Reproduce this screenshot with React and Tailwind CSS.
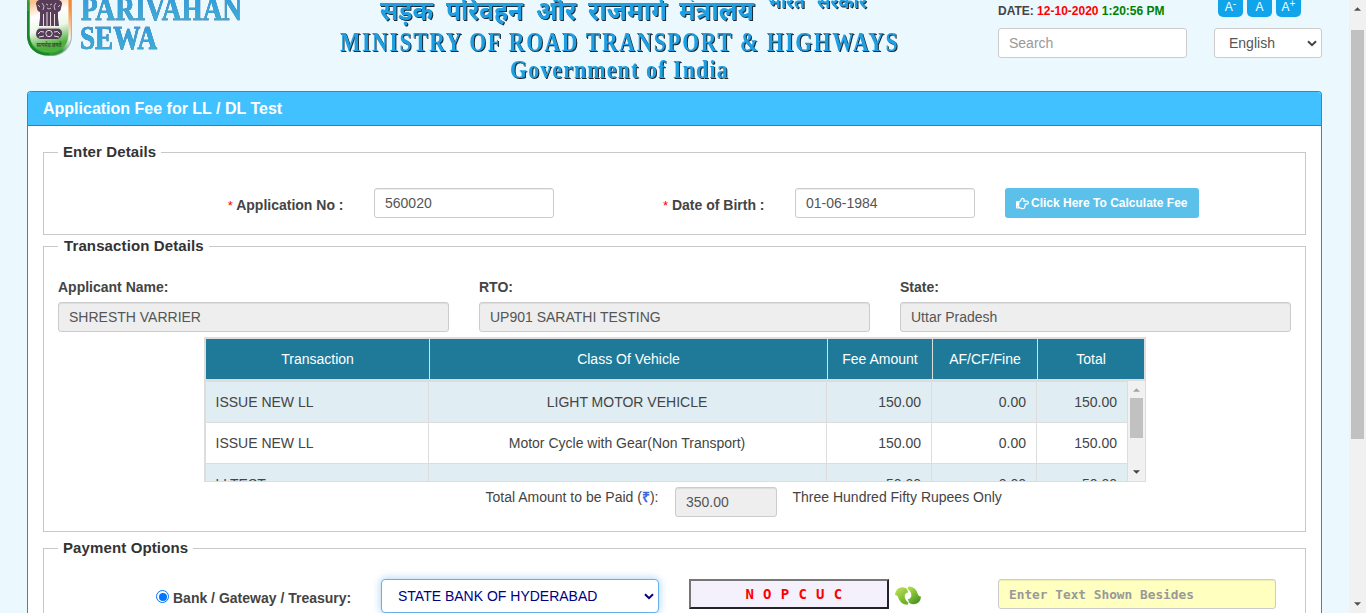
import React from "react";
import { FaRegHandPointRight } from "react-icons/fa";

const rows = [
  ["ISSUE NEW LL", "LIGHT MOTOR VEHICLE", "150.00", "0.00", "150.00"],
  ["ISSUE NEW LL", "Motor Cycle with Gear(Non Transport)", "150.00", "0.00", "150.00"],
  ["LLTEST", "", "50.00", "0.00", "50.00"],
];

function Chevron({ className }) {
  return (
    <svg viewBox="0 0 10 7" className={className} fill="none" stroke="currentColor" strokeWidth="2">
      <path d="M1 1.2 L5 5.2 L9 1.2" />
    </svg>
  );
}

function Arrow({ up, className }) {
  return (
    <svg viewBox="0 0 8 4" className={className} fill="currentColor">
      <path d={up ? "M0 4 L4 0 L8 4Z" : "M0 0 L4 4 L8 0Z"} />
    </svg>
  );
}

function Emblem() {
  return (
    <g>
      <defs>
        <linearGradient id="rim" x1="1" y1="0" x2="0.2" y2="1">
          <stop offset="0.25" stopColor="#f58a35" />
          <stop offset="0.5" stopColor="#f4f4ee" />
          <stop offset="0.68" stopColor="#2f9a35" />
        </linearGradient>
        <linearGradient id="plate" x1="0.2" y1="0" x2="0.35" y2="1">
          <stop offset="0.3" stopColor="#f9c08e" />
          <stop offset="0.5" stopColor="#ffffff" />
          <stop offset="0.7" stopColor="#eef7e8" />
          <stop offset="0.94" stopColor="#4caf3c" />
        </linearGradient>
      </defs>
      <rect x="2" y="-23" width="43" height="79" rx="20" fill="#7d8a86" opacity="0.6" />
      <rect x="0" y="-25" width="44" height="80.5" rx="20" fill="url(#rim)" />
      <path d="M1 11V35Q2 54 22 54" fill="none" stroke="#17862a" strokeWidth="2.2" />
      <rect x="2.8" y="-22" width="38.6" height="74.5" rx="17.5" fill="url(#plate)" />
      <g fill="#4f3554" opacity="0.95">
        <path d="M9 4Q9 1 12 0H32Q35 1 35 4L34 8Q34 11 31 12V18L32 26H12L13 18V12Q10 11 10 8Z" />
        <path d="M12 28.5H32Q35.5 30 35 34.5Q34 38 31 39H13Q9.500 38 9 34.500Q9 30 12 28.500Z" />
      </g>
      <g stroke="#e9dadd" strokeWidth="1" fill="none">
        <path d="M20 12V27M23.500 12V27M16.500 14V26M27.500 14V26" />
        <path d="M15 3L17 6L16 10M29 3L27 6L28 10M19 4L21 5M25 4L23 5M20 8Q22 10 24 8M11 5L13 7M33 5L31 7" strokeWidth="0.8" />
        <circle cx="22" cy="33.5" r="3.2" />
        <path d="M11 34Q13 30 17 32M12 37L17 36M33 34Q31 30 27 32M32 37L27 36" />
        <path d="M11 27.700H33" />
      </g>
      <text x="9.500" y="46.500" fontSize="6" fontWeight="bold" fill="#3f4b35" textLength="25" lengthAdjust="spacingAndGlyphs">सत्यमेव जयते</text>
    </g>
  );
}

function Header() {
  return (
    <header className="flex h-[91px] shrink-0 items-start pl-[27px]">
      <svg width="230" height="60" viewBox="0 0 230 60" className="shrink-0" fontFamily="'Liberation Serif','Noto Sans',serif">
        <defs>
          <linearGradient id="word" x1="0" y1="0" x2="0" y2="1">
            <stop offset="0.2" stopColor="#309ee2" />
            <stop offset="1" stopColor="#42b2cf" />
          </linearGradient>
        </defs>
        <Emblem />
        <g fill="url(#word)" stroke="#38a7dc" strokeWidth="0.5" fontSize="33" fontWeight="bold" className="[filter:drop-shadow(0.8px_0.8px_0.5px_#6e5a72)]">
          <text x="54" y="20" textLength="161" lengthAdjust="spacingAndGlyphs">PARIVAHAN</text>
          <text x="53" y="49" textLength="77" lengthAdjust="spacingAndGlyphs">SEWA</text>
        </g>
      </svg>
      <svg width="580" height="88" viewBox="330 0 580 88" className="ml-[73px] shrink-0 [filter:drop-shadow(1px_1px_0.3px_#1c2a33)]" fill="#1f9fe2" fontWeight="bold">
        <g fontFamily="'Noto Sans',sans-serif" fontSize="27">
          <text x="380" y="19.500" textLength="53" lengthAdjust="spacingAndGlyphs">सड़क</text>
          <text x="446" y="19.500" textLength="77" lengthAdjust="spacingAndGlyphs">परिवहन</text>
          <text x="536" y="19.500" textLength="40" lengthAdjust="spacingAndGlyphs">और</text>
          <text x="588" y="19.500" textLength="79" lengthAdjust="spacingAndGlyphs">राजमार्ग</text>
          <text x="679" y="19.500" textLength="75" lengthAdjust="spacingAndGlyphs">मंत्रालय</text>
          <text x="767" y="7.500" fontSize="19" textLength="38" lengthAdjust="spacingAndGlyphs">भारत</text>
          <text x="817" y="7.500" fontSize="19" textLength="50" lengthAdjust="spacingAndGlyphs">सरकार</text>
        </g>
        <g fontFamily="'Liberation Serif',serif">
          <text transform="translate(340 51.300) scale(0.8 1)" fontSize="27" textLength="697" lengthAdjust="spacing">MINISTRY OF ROAD TRANSPORT &amp; HIGHWAYS</text>
          <text transform="translate(510 77.500) scale(0.84 1)" fontSize="26" textLength="259" lengthAdjust="spacing">Government of India</text>
        </g>
      </svg>
      <div className="ml-[88px] w-[324px] shrink-0">
        <div className="flex h-[28px] items-start">
          <div className="w-[220px] pt-[3px] text-[12px] leading-[16px] font-bold whitespace-nowrap">
            DATE: <span className="text-[#ff0000]">12-10-2020</span> <span className="text-[#008000]">1:20:56 PM</span>
          </div>
          <div className="flex gap-1 text-[12px] leading-[14px] text-white">
            {["-", "", "+"].map((s, i) => (
              <div key={i} className="h-[17px] w-[25px] rounded-b-[5px] bg-[#10a5ea] text-center">
                A<span className="relative -top-[4px] text-[10px] leading-none">{s}</span>
              </div>
            ))}
          </div>
        </div>
        <div className="flex gap-[27px] text-[14px]">
          <div className="flex h-[30px] w-[189px] items-center rounded-[3px] border border-[#ccc] bg-white px-[10px] text-[#999]">Search</div>
          <div className="flex h-[30px] w-[108px] items-center justify-between rounded-[3px] border border-[#ccc] bg-white pr-[4px] pl-[14px] text-[#555]">
            English
            <Chevron className="h-[7px] w-[10px] text-[#444]" />
          </div>
        </div>
      </div>
    </header>
  );
}

function Fieldset({ title, className, legendClass = "", children }) {
  return (
    <fieldset className={"m-0 block min-w-0 border border-[#c8c8c8] " + className}>
      <legend className={"ml-[14px] h-[21px] px-[5px] text-[15px] leading-[20px] font-bold tracking-[0.12px] text-[#333] " + legendClass}>{title}</legend>
      {children}
    </fieldset>
  );
}

const input =
  "flex h-[30px] shrink-0 items-center rounded-[3px] border border-[#ccc] px-[10px] text-[#555] shadow-[inset_0_1px_1px_rgba(0,0,0,0.075)] ";

function Field({ label, value }) {
  return (
    <div className="w-[391px]">
      <div className="h-[25px] leading-[20px] font-bold">{label}</div>
      <div className={input + "bg-[#eee]"}>{value}</div>
    </div>
  );
}

function FeeTable() {
  return (
    <div className="ml-[160px] w-[942px] border-t-2 border-r border-b border-l-2 border-[#ddd]">
      <div className="grid h-[42px] grid-cols-[224px_398px_105px_105px_107px] border-b-2 border-[#ddd] bg-[#1f7a99] text-center leading-[40px] text-white *:border-r *:border-[#ddd]">
        <div>Transaction</div>
        <div>Class Of Vehicle</div>
        <div>Fee Amount</div>
        <div>AF/CF/Fine</div>
        <div>Total</div>
      </div>
      <div className="flex h-[100px] overflow-hidden">
        <div className="w-[922px]">
          {rows.map((r, i) => (
            <div
              key={i}
              className={
                "grid h-[41px] grid-cols-[223px_398px_105px_105px_91px] border-t border-[#ddd] text-right leading-[41px] *:border-r *:border-[#ddd] *:pr-[10px] " +
                (i % 2 ? "bg-white" : "bg-[#e0edf3]")
              }
            >
              <div className="pl-[9.500px] text-left">{r[0]}</div>
              <div className="pl-[9px] text-center">{r[1]}</div>
              <div>{r[2]}</div>
              <div>{r[3]}</div>
              <div>{r[4]}</div>
            </div>
          ))}
        </div>
        <div className="flex w-[17px] flex-col items-center bg-[#f1f1f1]">
          <Arrow up className="mt-[7px] h-[4px] w-[7px] text-[#a3a3a3]" />
          <div className="mt-[6px] h-[40px] w-[13px] bg-[#c1c1c1]" />
          <Arrow className="mt-[32px] h-[4px] w-[7px] text-[#444]" />
        </div>
      </div>
    </div>
  );
}

function RefreshIcon() {
  const swoosh = "M0 11Q0.500 4 7 3.200Q10.500 3 12 5L13.200 8.500Q11 8 9.800 11Q9 15 13.500 19L12.500 20.800Q5 20.500 3 13Q1.800 10.500 0 11Z";
  return (
    <svg viewBox="0 0 26 23" className="mt-[5px] ml-[6px] h-[23px] w-[26px] shrink-0">
      <defs>
        <linearGradient id="leafA" x1="0" y1="0" x2="0.6" y2="1">
          <stop offset="0.1" stopColor="#b9e05a" />
          <stop offset="1" stopColor="#6cb024" />
        </linearGradient>
        <linearGradient id="leafB" x1="0" y1="0" x2="0.6" y2="1">
          <stop offset="0.1" stopColor="#3f8f1c" />
          <stop offset="1" stopColor="#a5d843" />
        </linearGradient>
      </defs>
      <path d={swoosh} fill="url(#leafA)" />
      <path d={swoosh} fill="url(#leafB)" transform="rotate(180 13 11.700)" />
    </svg>
  );
}

export default function App() {
  return (
    <div className="flex h-[613px] w-[1366px] overflow-hidden bg-[#ebf8fe] font-['Liberation_Sans',Arial,sans-serif] text-[14px] leading-[20px] text-[#444]">
      <div className="flex w-[1349px] flex-col">
        <Header />
        <main className="mx-[27px] flex-1 rounded-t-[4px] border-x border-t border-[#1297cf] bg-white">
          <h1 className="h-[34px] rounded-t-[3px] border-b border-[#1d88c4] bg-[#41c1ff] pl-[15px] text-[16px] leading-[33px] font-bold text-white">
            Application Fee for LL / DL Test
          </h1>
          <div className="px-[15px] pt-[16px]">
            <Fieldset title="Enter Details" className="h-[93px]">
              <div className="flex items-start pt-[25px]">
                <div className="w-[299.500px] pt-[7px] text-right font-bold">
                  <span className="text-[13px] font-normal text-[#ff0000]">*</span> Application No :
                </div>
                <div className={input + "ml-[30.500px] w-[180px] bg-white"}>560020</div>
                <div className="w-[210.500px] pt-[7px] text-right font-bold">
                  <span className="text-[13px] font-normal text-[#ff0000]">*</span> Date of Birth :
                </div>
                <div className={input + "ml-[30.500px] w-[180px] bg-white"}>01-06-1984</div>
                <div className="ml-[30px] flex h-[30px] w-[194px] items-center rounded-[3px] bg-[#5bc0ea] pl-[11px] text-[12px] font-bold whitespace-nowrap text-white">
                  <FaRegHandPointRight className="mr-[2px] h-[13px] w-[13px]" />
                  Click Here To Calculate Fee
                </div>
              </div>
            </Fieldset>
            <Fieldset title="Transaction Details" className="mt-px h-[296px]" legendClass="pl-[6px]">
              <div className="flex gap-[30px] pt-[20px] pl-[14px]">
                <Field label="Applicant Name:" value="SHRESTH VARRIER" />
                <Field label="RTO:" value="UP901 SARATHI TESTING" />
                <Field label="State:" value="Uttar Pradesh" />
              </div>
              <div className="pt-[5px]">
                <FeeTable />
              </div>
              <div className="flex items-start pt-[5px] pl-[441.500px]">
                <div className="w-[189.500px] whitespace-nowrap">
                  Total Amount to be Paid (<span className="font-bold text-[#3b68dc]">₹</span>):
                </div>
                <div className={input + "w-[102px] bg-[#eee]"}>350.00</div>
                <div className="ml-[15.500px]">Three Hundred Fifty Rupees Only</div>
              </div>
            </Fieldset>
            <Fieldset title="Payment Options" className="mt-[6px] h-[120px]">
              <div className="flex items-start pt-[20px] pl-[112px]">
                <div className="mt-[11px] flex h-[13px] w-[13px] items-center justify-center rounded-full border border-[#0075ff]">
                  <div className="h-[8px] w-[8px] rounded-full bg-[#0075ff]" />
                </div>
                <div className="w-[212px] pt-[9px] pl-[4px] font-bold">Bank / Gateway / Treasury:</div>
                <div className="flex h-[34px] w-[278px] items-center justify-between rounded-[4px] border border-[#66afe9] bg-white pr-[4px] pl-[16px] text-[#000080] shadow-[0_0_8px_rgba(102,175,233,0.6)]">
                  STATE BANK OF HYDERABAD
                  <Chevron className="h-[7px] w-[10px]" />
                </div>
                <div className="ml-[30px] flex h-[30px] w-[200px] shrink-0 items-center justify-center border-2 border-t-[#767676] border-r-[#262229] border-b-[#262229] border-l-[#767676] bg-[#f5f1fc] pl-[10px] font-['DejaVu_Sans_Mono',monospace] text-[14px] font-bold tracking-[0.4px] whitespace-pre text-[#ff0000]">
                  N O P C U C
                </div>
                <RefreshIcon />
                <div className={input + "ml-[77px] w-[278px] bg-[#ffffc0] pt-[1px] font-['DejaVu_Sans_Mono',monospace] text-[12.8px] font-bold !text-[#999]"}>
                  Enter Text Shown Besides
                </div>
              </div>
            </Fieldset>
          </div>
        </main>
      </div>
      <div className="flex w-[17px] flex-col items-center bg-[#f1f1f1]">
        <Arrow up className="mt-[7px] h-[4px] w-[7px] text-[#505050]" />
        <div className="mt-[19px] h-[409px] w-[13px] bg-[#c1c1c1]" />
        <Arrow className="mt-[163px] h-[4px] w-[7px] text-[#505050]" />
      </div>
    </div>
  );
}
